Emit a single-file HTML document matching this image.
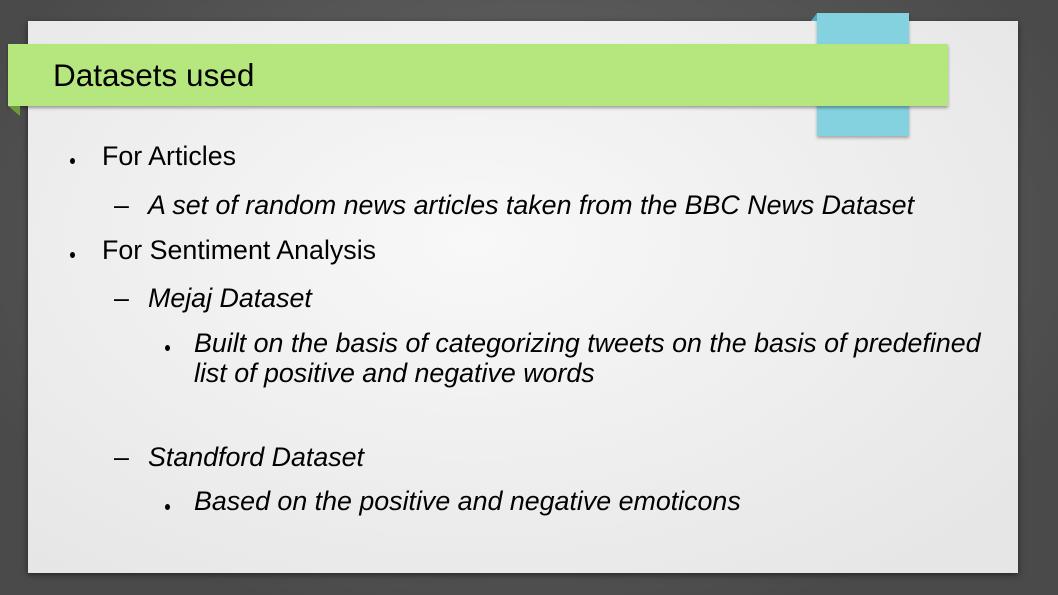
<!DOCTYPE html>
<html><head><style>
html,body{margin:0;padding:0}
body{width:1058px;height:595px;overflow:hidden;position:relative;background:radial-gradient(ellipse at 50% 40%,#6a6a6a,#4a4a4a 80%);font-family:"Liberation Sans",sans-serif;color:#000}
.card{position:absolute;left:28px;top:21px;width:990px;height:552px;background:radial-gradient(ellipse at 45% 40%,#f8f8f8,#e6e6e6 90%);box-shadow:0 2px 6px rgba(0,0,0,.5)}
.blue{position:absolute;left:817px;top:13px;width:92px;height:123px;background:#84d2e0;box-shadow:0 2px 3px rgba(0,0,0,.3)}
.blue:before{content:"";position:absolute;left:-6px;top:0;border-right:6px solid #4fa8bd;border-top:8px solid transparent}
.green{position:absolute;left:8px;top:44px;width:940px;height:62px;background:#b6e77e;box-shadow:0 2px 3px rgba(0,0,0,.35)}
.green:after{content:"";position:absolute;left:0;top:62px;border-top:10px solid #6c9a3a;border-left:12px solid transparent}
.title{position:absolute;left:53px;top:57px;font-size:31.5px}
.t{position:absolute;font-size:26.8px;white-space:nowrap;letter-spacing:0}
.i{font-style:italic}
.b{position:absolute;width:5px;height:6px;border-radius:50%;background:#000}
</style></head><body>
<div class="card"></div>
<div class="blue"></div>
<div class="green"></div>
<div class="title">Datasets used</div>
<div class="b" style="left:70px;top:158px"></div>
<div class="t" style="left:102px;top:141px">For Articles</div>
<div class="t" style="left:114px;top:190px">–</div>
<div class="t i" style="left:148px;top:190px">A set of random news articles taken from the BBC News Dataset</div>
<div class="b" style="left:70px;top:252px"></div>
<div class="t" style="left:102px;top:235px">For Sentiment Analysis</div>
<div class="t" style="left:114px;top:283px">–</div>
<div class="t i" style="left:148px;top:283px">Mejaj Dataset</div>
<div class="b" style="left:165px;top:345px"></div>
<div class="t i" style="left:194px;top:328px">Built on the basis of categorizing tweets on the basis of predefined</div>
<div class="t i" style="left:194px;top:358px">list of positive and negative words</div>
<div class="t" style="left:114px;top:442px">–</div>
<div class="t i" style="left:148px;top:442px">Standford Dataset</div>
<div class="b" style="left:165px;top:504px"></div>
<div class="t i" style="left:194px;top:486px">Based on the positive and negative emoticons</div>
</body></html>
